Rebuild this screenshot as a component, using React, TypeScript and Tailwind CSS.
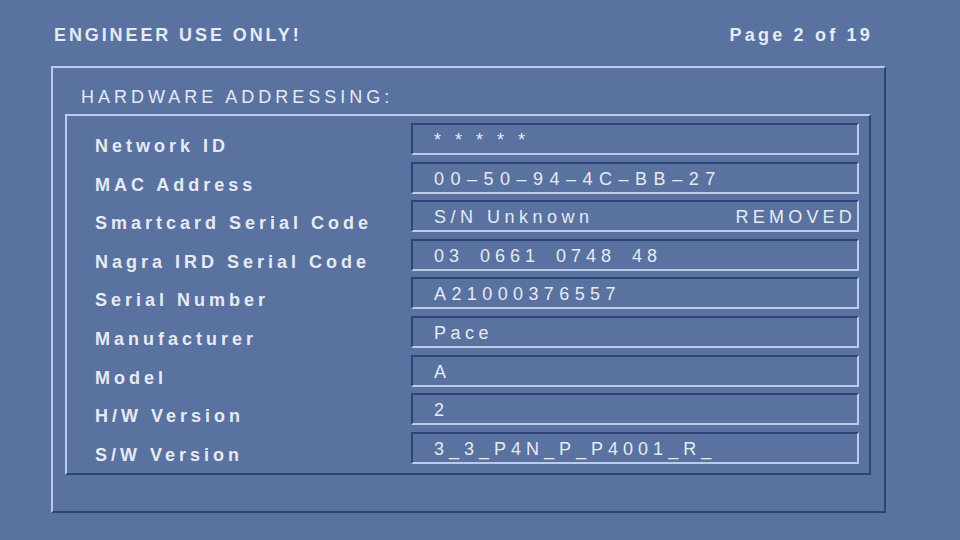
import React from "react"

const rows: { label: string; value: string; extra?: string; track: string }[] = [
  { label: "Network ID", value: "* * * * *", track: "tracking-[4.5px]" },
  { label: "MAC Address", value: "00–50–94–4C–BB–27", track: "tracking-[6.5px]" },
  { label: "Smartcard Serial Code", value: "S/N Unknown", extra: "REMOVED", track: "tracking-[4.5px]" },
  { label: "Nagra IRD Serial Code", value: "03 0661 0748 48", track: "tracking-[5px] [word-spacing:6px]" },
  { label: "Serial Number", value: "A21000376557", track: "tracking-[5.4px]" },
  { label: "Manufacturer", value: "Pace", track: "tracking-[4.5px]" },
  { label: "Model", value: "A", track: "tracking-[4.5px]" },
  { label: "H/W Version", value: "2", track: "tracking-[4.5px]" },
  { label: "S/W Version", value: "3_3_P4N_P_P4001_R_", track: "tracking-[5px]" },
]

const font = { fontFamily: '"Liberation Sans", Arial, sans-serif' }

export default function App() {
  return (
    <div
      className="h-[540px] w-[960px] overflow-hidden bg-[#5a72a0] text-[#e6eaf3]"
      style={font}
    >
      {/* top bar */}
      <div className="flex items-center justify-between pl-[54px] pr-[87px] pt-[25px] text-[18px] font-bold leading-[20px]">
        <span className="tracking-[2.9px]">ENGINEER USE ONLY!</span>
        <span className="tracking-[3.2px]">Page 2 of 19</span>
      </div>

      {/* outer raised panel */}
      <div className="ml-[51px] mt-[21px] h-[447px] w-[835px] border-2 border-t-[#bccbea] border-l-[#bccbea] border-b-[#2e4477] border-r-[#2e4477]">
        <div className="pl-[28px] pt-[19px] text-[18px] leading-[20px] tracking-[4px]">
          HARDWARE ADDRESSING:
        </div>

        {/* inner raised panel */}
        <div className="ml-[12px] mt-[7px] h-[361px] w-[806px] border-2 border-t-[#bccbea] border-l-[#bccbea] border-b-[#2e4477] border-r-[#2e4477]">
          <div className="flex flex-col gap-[6.6px] pt-[7px]">
            {rows.map((r) => (
              <div key={r.label} className="flex h-[32px] items-start">
                <div className="mt-[13px] w-[344px] pl-[28px] text-[18px] font-bold leading-[20px] tracking-[4px]">
                  {r.label}
                </div>
                {/* sunken value field */}
                <div className="flex h-[32px] w-[448px] items-start justify-between border-2 border-t-[#2e4477] border-l-[#2e4477] border-b-[#bccbea] border-r-[#bccbea] pl-[21px] pr-[1px] pt-[5px] text-[18px] leading-[20px]">
                  <span className={r.track}>{r.value}</span>
                  {r.extra && <span className="tracking-[4.2px]">{r.extra}</span>}
                </div>
              </div>
            ))}
          </div>
        </div>
      </div>
    </div>
  )
}
